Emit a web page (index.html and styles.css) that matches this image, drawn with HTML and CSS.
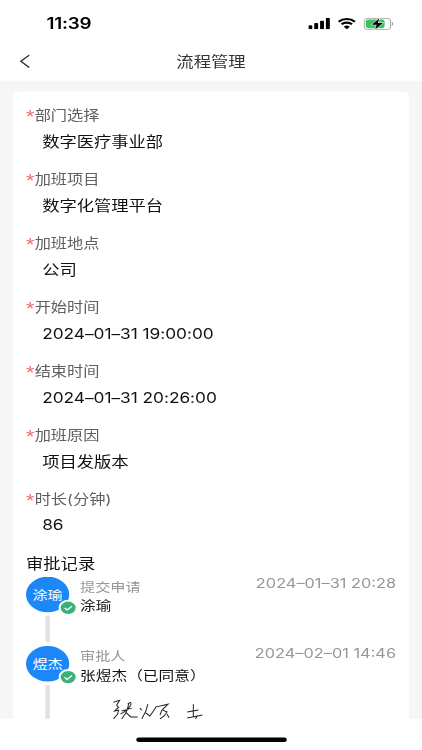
FILE: index.html
```html
<!DOCTYPE html>
<html lang="zh-CN">
<head>
    <meta charset="UTF-8">
    <meta name="viewport" content="width=device-width, initial-scale=1.0">
    <title>流程管理</title>
    <link rel="stylesheet" href="styles.css">
</head>
<body>
    <div class="phone">
        <div class="status-bar">
            <span class="clock">11:39</span>
            <div class="status-icons">
                <svg class="signal" viewBox="0 0 20 13">
                    <rect x="0" y="8.5" width="3.6" height="4.5" rx="1"/>
                    <rect x="5.4" y="6" width="3.6" height="7" rx="1"/>
                    <rect x="10.8" y="3.3" width="3.6" height="9.7" rx="1"/>
                    <rect x="16.2" y="0" width="3.6" height="13" rx="1"/>
                </svg>
                <svg class="wifi" viewBox="0 0 17 13">
                    <path d="M1 4.5a10.8 10.8 0 0 1 15 0M3.7 7.4a6.9 6.9 0 0 1 9.6 0" fill="none" stroke="#000" stroke-width="2.3"/>
                    <path d="M5.7 10a4.1 4.1 0 0 1 5.6 0L8.5 12.8z"/>
                </svg>
                <svg class="battery" viewBox="0 0 28 14">
                    <rect x=".5" y=".5" width="24.5" height="12.8" rx="3.8" fill="none" stroke="#a3a3a3"/>
                    <rect x="2" y="2" width="17.5" height="9.8" rx="2.4" fill="#3cc35f"/>
                    <path d="M26.2 4.8c1.6.7 1.6 3.7 0 4.4z" fill="#999"/>
                    <path d="M14.6.6L7.6 7.9h4.5L10.7 13.2l7.3-7.3h-4.8z" stroke="#fff" stroke-width="1" paint-order="stroke"/>
                </svg>
            </div>
        </div>

        <div class="nav-bar">
            <svg class="back" viewBox="0 0 10 16">
                <path d="M9 1L1.3 8L9 15" fill="none" stroke="#333" stroke-width="1.4"/>
            </svg>
            <h1 class="nav-title">流程管理</h1>
        </div>

        <div class="content">
            <div class="card">
                <div class="field">
                    <div class="label"><span class="required">*</span>部门选择</div>
                    <div class="value">数字医疗事业部</div>
                </div>
                <div class="field">
                    <div class="label"><span class="required">*</span>加班项目</div>
                    <div class="value">数字化管理平台</div>
                </div>
                <div class="field">
                    <div class="label"><span class="required">*</span>加班地点</div>
                    <div class="value">公司</div>
                </div>
                <div class="field">
                    <div class="label"><span class="required">*</span>开始时间</div>
                    <div class="value">2024–01–31 19:00:00</div>
                </div>
                <div class="field">
                    <div class="label"><span class="required">*</span>结束时间</div>
                    <div class="value">2024–01–31 20:26:00</div>
                </div>
                <div class="field">
                    <div class="label"><span class="required">*</span>加班原因</div>
                    <div class="value">项目发版本</div>
                </div>
                <div class="field">
                    <div class="label"><span class="required">*</span>时长(分钟)</div>
                    <div class="value">86</div>
                </div>

                <h2 class="section-title">审批记录</h2>

                <div class="record">
                    <div class="track">
                        <div class="avatar">涂瑜
                            <svg class="badge" viewBox="0 0 16 16">
                                <circle cx="8" cy="8" r="8" fill="#fff"/>
                                <circle cx="8" cy="8" r="6.2" fill="#3bb077"/>
                                <path d="M5 8.1l2.2 2.1L11.2 6.3" fill="none" stroke="#fff" stroke-width="1.2"/>
                            </svg>
                        </div>
                        <div class="line"></div>
                    </div>
                    <div class="record-main">
                        <div class="role">提交申请</div>
                        <div class="name">涂瑜</div>
                    </div>
                    <div class="date">2024–01–31 20:28</div>
                </div>

                <div class="record last">
                    <div class="track">
                        <div class="avatar">煜杰
                            <svg class="badge" viewBox="0 0 16 16">
                                <circle cx="8" cy="8" r="8" fill="#fff"/>
                                <circle cx="8" cy="8" r="6.2" fill="#3bb077"/>
                                <path d="M5 8.1l2.2 2.1L11.2 6.3" fill="none" stroke="#fff" stroke-width="1.2"/>
                            </svg>
                        </div>
                        <div class="line"></div>
                    </div>
                    <div class="record-main">
                        <div class="role">审批人</div>
                        <div class="name">张煜杰（已同意）</div>
                        <!-- 手写签名 -->
                        <svg class="signature" viewBox="0 0 90 20" preserveAspectRatio="none">
                            <path d="M1 3L7 1L4 6L6 8L2 12L6 11L5 15L1 20M15 5Q19 1 18 6Q15 11 8 15M16 4Q15 13 9 20M9 12L19 9M13 13L18 18L25 18M27 9L29 11M35 5L33 12L29 20M33 14L37 17L43 8M42 8L55 5L49 11L47 16M50 11L54 13L51 17L47 20M54 15L56 19M80 5L80 18M74 13L85 11M74 19L79 18L89 16M84 17L82 20"/>
                        </svg>
                    </div>
                    <div class="date">2024–02–01 14:46</div>
                </div>
            </div>
        </div>

        <div class="home-indicator"></div>
    </div>
</body>
</html>
```
FILE: styles.css
```css
* {
    margin: 0;
    padding: 0;
    box-sizing: border-box;
}

body {
    width: 422px;
    height: 750px;
    overflow: hidden;
    background-color: #fff;
    font-family: Inter, "Noto Sans CJK SC", sans-serif;
}

/* 390x844 screen fitted to the window */
.phone {
    width: 390px;
    height: 844px;
    margin-bottom: -94px;
    display: flex;
    flex-direction: column;
    transform: scale(1.08205, 0.8886);
    transform-origin: 0 0;
}

.status-bar {
    height: 47px;
    padding: 6px 26px 0 43px;
    display: flex;
    justify-content: space-between;
    align-items: center;
}

.clock {
    font-size: 17.4px;
    font-weight: 600;
    letter-spacing: -0.2px;
}

.status-icons {
    display: flex;
    align-items: center;
    gap: 7px;
}

.signal {
    width: 20px;
    height: 13px;
}

.wifi {
    width: 17px;
    height: 13px;
}

.battery {
    width: 28px;
    height: 14px;
}

.nav-bar {
    height: 44px;
    padding: 0 18px;
    display: grid;
    grid-template-columns: 10px 1fr 10px;
    align-items: center;
}

.back {
    width: 10px;
    height: 16px;
}

.nav-title {
    padding-bottom: 2px;
    text-align: center;
    font-size: 16px;
    font-weight: 400;
    color: #333;
}

.content {
    height: 718px;
    padding: 12px 12px 0;
    overflow: hidden;
    background-color: #f6f6f6;
}

.card {
    height: 706px;
    padding: 0 12px;
    border-radius: 5px 5px 0 0;
    background-color: #fff;
    overflow: hidden;
}

.field {
    height: 72px;
    padding-top: 16px;
}

.label {
    font-size: 15px;
    line-height: 22px;
    color: #606060;
}

.required {
    display: inline-block;
    width: 8px;
    font-family: "Liberation Sans", sans-serif;
    font-size: 20px;
    line-height: 16px;
    vertical-align: -3px;
    color: #e87070;
}

.value {
    margin-top: 6px;
    padding-left: 15px;
    font-size: 16px;
    line-height: 24px;
    letter-spacing: -0.04px;
    color: #111;
}

.section-title {
    margin-top: 15px;
    font-size: 16px;
    font-weight: 400;
    line-height: 24px;
    color: #111;
}

.record {
    height: 78px;
    margin-top: 3px;
    display: flex;
}

.record.last {
    height: 82px;
    margin-top: 0;
}

.track {
    width: 40px;
    margin-right: 10px;
    display: flex;
    flex-direction: column;
    align-items: center;
    gap: 4px;
}

.avatar {
    position: relative;
    width: 40px;
    height: 40px;
    border-radius: 50%;
    background-color: #1c87f7;
    color: #fff;
    font-size: 14px;
    line-height: 41px;
    text-align: center;
    white-space: nowrap;
}

.badge {
    position: absolute;
    right: -8px;
    bottom: -4px;
    width: 18px;
    height: 18px;
}

.line {
    width: 4px;
    flex: 1;
    margin-bottom: 4px;
    background-color: #e2e2e2;
}

.last .line {
    margin-bottom: 0;
}

.record-main {
    flex: 1;
    padding-top: 1px;
    white-space: nowrap;
}

.role {
    font-size: 14px;
    line-height: 22px;
    color: #969696;
}

.name {
    font-size: 14.5px;
    line-height: 20px;
    color: #111;
}

.signature {
    display: block;
    width: 84px;
    height: 22px;
    margin: 17px 0 0 30px;
    fill: none;
    stroke: #222;
    stroke-width: 1;
}

.date {
    height: 14px;
    padding-top: 1px;
    font-size: 15.1px;
    line-height: 14px;
    color: #969696;
}

.home-indicator {
    width: 139px;
    height: 5px;
    margin: 21px auto 0;
    border-radius: 3px;
    background-color: #000;
}
```
